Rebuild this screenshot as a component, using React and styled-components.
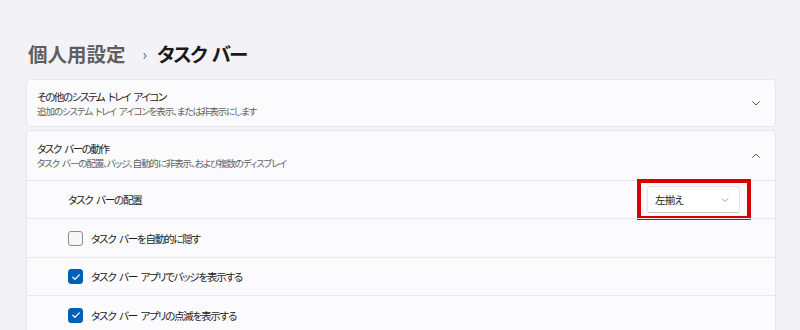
import React from "react";
import styled, { createGlobalStyle } from "styled-components";

const Global = createGlobalStyle`
  html, body { margin: 0; padding: 0; }
  body {
    background: #f3f3f7;
    font-family: "Noto Sans CJK JP", "Noto Sans", sans-serif;
    font-feature-settings: "palt";
    color: #1b1b1b;
    width: 800px;
    height: 330px;
    overflow: hidden;
  }
`;

const Page = styled.div`
  padding: 39px 24px 0 26px;
  display: flex;
  flex-direction: column;
`;

const Breadcrumb = styled.h1`
  margin: 0 0 10px 0;
  padding-left: 2px;
  font-size: 19.5px;
  font-weight: 700;
  line-height: 30px;
  display: flex;
  align-items: center;
`;

const Crumb = styled.span`
  color: ${(p) => (p.$current ? "#1a1a1a" : "#5e5e5e")};
  letter-spacing: ${(p) => (p.$current ? "-1.6px" : "0")};
  word-spacing: 3px;
  white-space: pre;
`;

const Sep = styled.span`
  color: #5e5e5e;
  font-size: 15px;
  font-weight: 400;
  margin: 0 10px 0 17px;
`;

const Card = styled.div`
  background: #fbfbfd;
  border: 1px solid #e7e7ea;
  border-radius: 4px;
  margin-bottom: 3px;
  display: flex;
  flex-direction: column;
`;

const Header = styled.div`
  display: flex;
  align-items: center;
  justify-content: space-between;
  height: ${(p) => p.$h}px;
  padding: 0 14px 0 10px;
`;

const TitleBox = styled.div`
  display: flex;
  flex-direction: column;
`;

const Title = styled.div`
  font-size: 10.5px;
  line-height: 15px;
  letter-spacing: -1.4px;
  word-spacing: 2.5px;
  white-space: pre;
  color: #1b1b1b;
`;

const Sub = styled.div`
  font-size: 9.5px;
  line-height: 14px;
  letter-spacing: -1.1px;
  word-spacing: 2px;
  white-space: pre;
  color: #616161;
`;

const Row = styled.div`
  display: flex;
  align-items: center;
  justify-content: space-between;
  box-sizing: border-box;
  height: ${(p) => p.$h}px;
  border-top: 1px solid #e8e8ea;
  padding: 0 24px 0 41px;
`;

const Label = styled.span`
  font-size: 10.5px;
  letter-spacing: -1.2px;
  word-spacing: 2.5px;
  white-space: pre;
  color: #1b1b1b;
  display: flex;
  align-items: center;
  gap: 8px;
`;

const Box = styled.span`
  width: 15px;
  height: 15px;
  box-sizing: border-box;
  border-radius: 3px;
  display: inline-flex;
  align-items: center;
  justify-content: center;
  background: ${(p) => (p.$checked ? "#005fb8" : "#f7f7f8")};
  border: 1px solid ${(p) => (p.$checked ? "#005fb8" : "#8c8c8c")};
`;

const Highlight = styled.div`
  border: 4px solid #d80000;
  padding: 3px 7px 3px 6px;
  display: flex;
  flex-shrink: 0;
`;

const Select = styled.div`
  width: 93px;
  height: 27px;
  box-sizing: border-box;
  background: #ffffff;
  border: 1px solid #e4e4e6;
  border-bottom-color: #c4c4c6;
  border-radius: 3px;
  display: flex;
  align-items: center;
  justify-content: space-between;
  padding: 0 10px 0 7px;
  font-size: 10.5px;
  letter-spacing: -0.8px;
  color: #1b1b1b;
`;

const Chevron = ({ up, size = 10, color = "#5a5a5a" }) => (
  <svg width={size} height={size} viewBox="0 0 10 10">
    <path
      d={up ? "M1.5 6.5 L5 3 L8.5 6.5" : "M1.5 3.5 L5 7 L8.5 3.5"}
      fill="none"
      stroke={color}
      strokeWidth="1"
      strokeLinecap="round"
      strokeLinejoin="round"
    />
  </svg>
);

const Check = () => (
  <svg width="10" height="10" viewBox="0 0 10 10">
    <path d="M1.8 5.2 L4 7.3 L8.3 2.8" fill="none" stroke="#fff" strokeWidth="1.2" strokeLinecap="round" strokeLinejoin="round" />
  </svg>
);

const CheckRow = ({ checked, h, children }) => (
  <Row $h={h}>
    <Label>
      <Box $checked={checked}>{checked && <Check />}</Box>
      {children}
    </Label>
  </Row>
);

export default function App() {
  return (
    <>
      <Global />
      <Page>
        <Breadcrumb>
          <Crumb>個人用設定</Crumb>
          <Sep>›</Sep>
          <Crumb $current>タスク バー</Crumb>
        </Breadcrumb>
        <Card>
          <Header $h={46}>
            <TitleBox>
              <Title>その他のシステム トレイ アイコン</Title>
              <Sub>追加のシステム トレイ アイコンを表示、または非表示にします</Sub>
            </TitleBox>
            <Chevron />
          </Header>
        </Card>
        <Card>
          <Header $h={49}>
            <TitleBox>
              <Title>タスク バーの動作</Title>
              <Sub>タスク バーの配置、バッジ、自動的に非表示、および複数のディスプレイ</Sub>
            </TitleBox>
            <Chevron up />
          </Header>
          <Row $h={38}>
            <Label>タスク バーの配置</Label>
            <Highlight>
              <Select>
                左揃え
                <Chevron size={8} color="#8a8a8a" />
              </Select>
            </Highlight>
          </Row>
          <CheckRow h={39}>タスク バーを自動的に隠す</CheckRow>
          <CheckRow h={38} checked>タスク バー アプリでバッジを表示する</CheckRow>
          <CheckRow h={39} checked>タスク バー アプリの点滅を表示する</CheckRow>
        </Card>
      </Page>
    </>
  );
}
